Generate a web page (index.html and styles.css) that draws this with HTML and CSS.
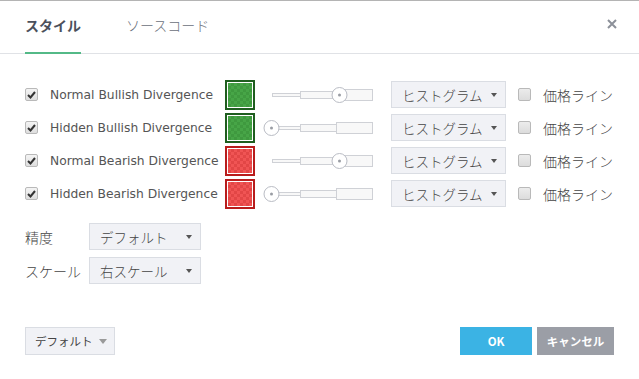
FILE: index.html
```html
<!DOCTYPE html>
<html lang="ja">
<head>
    <meta charset="UTF-8">
    <title>スタイル</title>
    <link rel="stylesheet" href="styles.css">
</head>
<body>
    <div class="dialog">
        <div class="header">
            <div class="tab active">スタイル</div>
            <div class="tab">ソースコード</div>
            <svg class="close" width="10" height="10" viewBox="0 0 10 10">
                <path d="M1 1 L9 9 M9 1 L1 9" stroke="#8c9099" stroke-width="2"/>
            </svg>
        </div>

        <div class="content">
            <div class="row">
                <span class="check checked"><svg width="9" height="8" viewBox="0 0 9 8"><path d="M1 4 L3.5 6.5 L8 1" stroke="#333" stroke-width="2" fill="none"/></svg></span>
                <span class="label">Normal Bullish Divergence</span>
                <span class="swatch green"><span></span></span>
                <svg class="slider" width="112" height="20" viewBox="0 0 112 20">
                    <rect x="10.5" y="8.5" width="28" height="3" fill="#f8f8f8" stroke="#cfd1d6"/>
                    <rect x="38.5" y="6.5" width="36" height="7" fill="#f8f8f8" stroke="#cfd1d6"/>
                    <rect x="74.5" y="4.5" width="36" height="11" fill="#f8f8f8" stroke="#cfd1d6"/>
                    <circle cx="77.5" cy="10" r="7.5" fill="#fff" stroke="#b9bcc4"/>
                    <circle cx="77.5" cy="10" r="1.5" fill="#9a9da4"/>
                </svg>
                <span class="select wide">ヒストグラム<i class="caret"></i></span>
                <span class="check"></span>
                <span class="price">価格ライン</span>
            </div>
            <div class="row">
                <span class="check checked"><svg width="9" height="8" viewBox="0 0 9 8"><path d="M1 4 L3.5 6.5 L8 1" stroke="#333" stroke-width="2" fill="none"/></svg></span>
                <span class="label">Hidden Bullish Divergence</span>
                <span class="swatch green"><span></span></span>
                <svg class="slider" width="112" height="20" viewBox="0 0 112 20">
                    <rect x="10.5" y="8.5" width="28" height="3" fill="#f8f8f8" stroke="#cfd1d6"/>
                    <rect x="38.5" y="6.5" width="36" height="7" fill="#f8f8f8" stroke="#cfd1d6"/>
                    <rect x="74.5" y="4.5" width="36" height="11" fill="#f8f8f8" stroke="#cfd1d6"/>
                    <circle cx="9.5" cy="10" r="7.5" fill="#fff" stroke="#b9bcc4"/>
                    <circle cx="9.5" cy="10" r="1.5" fill="#9a9da4"/>
                </svg>
                <span class="select wide">ヒストグラム<i class="caret"></i></span>
                <span class="check"></span>
                <span class="price">価格ライン</span>
            </div>
            <div class="row">
                <span class="check checked"><svg width="9" height="8" viewBox="0 0 9 8"><path d="M1 4 L3.5 6.5 L8 1" stroke="#333" stroke-width="2" fill="none"/></svg></span>
                <span class="label">Normal Bearish Divergence</span>
                <span class="swatch red"><span></span></span>
                <svg class="slider" width="112" height="20" viewBox="0 0 112 20">
                    <rect x="10.5" y="8.5" width="28" height="3" fill="#f8f8f8" stroke="#cfd1d6"/>
                    <rect x="38.5" y="6.5" width="36" height="7" fill="#f8f8f8" stroke="#cfd1d6"/>
                    <rect x="74.5" y="4.5" width="36" height="11" fill="#f8f8f8" stroke="#cfd1d6"/>
                    <circle cx="77.5" cy="10" r="7.5" fill="#fff" stroke="#b9bcc4"/>
                    <circle cx="77.5" cy="10" r="1.5" fill="#9a9da4"/>
                </svg>
                <span class="select wide">ヒストグラム<i class="caret"></i></span>
                <span class="check"></span>
                <span class="price">価格ライン</span>
            </div>
            <div class="row">
                <span class="check checked"><svg width="9" height="8" viewBox="0 0 9 8"><path d="M1 4 L3.5 6.5 L8 1" stroke="#333" stroke-width="2" fill="none"/></svg></span>
                <span class="label">Hidden Bearish Divergence</span>
                <span class="swatch red"><span></span></span>
                <svg class="slider" width="112" height="20" viewBox="0 0 112 20">
                    <rect x="10.5" y="8.5" width="28" height="3" fill="#f8f8f8" stroke="#cfd1d6"/>
                    <rect x="38.5" y="6.5" width="36" height="7" fill="#f8f8f8" stroke="#cfd1d6"/>
                    <rect x="74.5" y="4.5" width="36" height="11" fill="#f8f8f8" stroke="#cfd1d6"/>
                    <circle cx="9.5" cy="10" r="7.5" fill="#fff" stroke="#b9bcc4"/>
                    <circle cx="9.5" cy="10" r="1.5" fill="#9a9da4"/>
                </svg>
                <span class="select wide">ヒストグラム<i class="caret"></i></span>
                <span class="check"></span>
                <span class="price">価格ライン</span>
            </div>

            <div class="options">
                <div class="option">
                    <span class="opt-label">精度</span>
                    <span class="select narrow">デフォルト<i class="caret"></i></span>
                </div>
                <div class="option">
                    <span class="opt-label">スケール</span>
                    <span class="select narrow">右スケール<i class="caret"></i></span>
                </div>
            </div>
        </div>

        <div class="footer">
            <span class="btn-default">デフォルト<i class="caret light"></i></span>
            <div class="actions">
                <span class="btn ok">OK</span>
                <span class="btn cancel">キャンセル</span>
            </div>
        </div>
    </div>
</body>
</html>
```

FILE: styles.css
```css
body {
    margin: 0;
    background-color: #ffffff;
    font-family: "Noto Sans CJK JP", "DejaVu Sans", sans-serif;
    font-weight: 300;
    color: #444444;
}
.dialog {
    width: 639px;
    height: 379px;
    border-top: 1px solid #b4b4b4;
    box-sizing: border-box;
    display: flex;
    flex-direction: column;
}
.header {
    height: 52px;
    border-bottom: 1px solid #e0e2e6;
    display: flex;
    align-items: stretch;
    padding-left: 25px;
    position: relative;
}
.tab {
    font-size: 14px;
    color: #6b707b;
    display: flex;
    align-items: center;
    margin-right: 45px;
    padding-bottom: 3px;
    box-sizing: border-box;
    border-bottom: 2px solid transparent;
    margin-bottom: -1px;
}
.tab.active {
    color: #4b505c;
    font-weight: bold;
    border-bottom-color: #53b987;
}
.close {
    position: absolute;
    right: 22px;
    top: 18px;
}
.content {
    padding: 24px 0 0 25px;
}
.row {
    display: flex;
    align-items: center;
    height: 33px;
}
.check {
    width: 11px;
    height: 11px;
    border: 1px solid #b9b9b9;
    border-radius: 2px;
    background: linear-gradient(#f4f4f4, #dedede);
    display: flex;
    align-items: center;
    justify-content: center;
    flex-shrink: 0;
}
.label {
    font-family: "DejaVu Sans", sans-serif;
    font-weight: normal;
    font-size: 12.3px;
    color: #555555;
    margin-left: 12px;
    width: 175px;
    white-space: nowrap;
}
.swatch {
    width: 24px;
    height: 24px;
    border: 2px solid #1f5e1f;
    padding: 1px;
    background: #ffffff;
    display: block;
}
.swatch span {
    display: block;
    width: 100%;
    height: 100%;
    background-size: 6px 6px;
}
.swatch.green span {
    background-color: #47a547;
    background-image: conic-gradient(#3f993f 25%, transparent 0 50%, #3f993f 0 75%, transparent 0);
}
.swatch.red {
    border-color: #b81c1c;
}
.swatch.red span {
    background-color: #f05454;
    background-image: conic-gradient(#e24646 25%, transparent 0 50%, #e24646 0 75%, transparent 0);
}
.slider {
    margin-left: 7px;
    display: block;
}
.select {
    height: 25px;
    border: 1px solid #dadde3;
    background-color: #f1f2f6;
    font-size: 13.5px;
    display: flex;
    align-items: center;
    padding-left: 10px;
    position: relative;
    box-sizing: content-box;
    white-space: nowrap;
}
.select.wide {
    width: 103px;
    margin-left: 17px;
}
.select.narrow {
    width: 100px;
}
.caret {
    position: absolute;
    right: 8px;
    top: 11px;
    border-left: 3.5px solid transparent;
    border-right: 3.5px solid transparent;
    border-top: 4px solid #555555;
}
.row .check:not(.checked) {
    margin-left: 12px;
    background: linear-gradient(#ececec, #dcdcdc);
}
.price {
    font-size: 14px;
    margin-left: 12px;
}
.options {
    margin-top: 13px;
    display: flex;
    flex-direction: column;
    gap: 7px;
}
.option {
    display: flex;
    align-items: center;
}
.opt-label {
    width: 64px;
    font-size: 14px;
}
.footer {
    margin-top: auto;
    height: 52px;
    padding: 0 25px;
    display: flex;
    align-items: flex-start;
    justify-content: space-between;
}
.btn-default {
    height: 26px;
    padding: 0 21px 0 9px;
    border: 1px solid #dadde3;
    background-color: #f1f2f6;
    font-size: 11.5px;
    font-weight: normal;
    display: flex;
    align-items: center;
    position: relative;
}
.caret.light {
    border-top-color: #9a9a9a;
    border-left-width: 4.5px;
    border-right-width: 4.5px;
    border-top-width: 5px;
    right: 7px;
}
.actions {
    display: flex;
    gap: 5px;
}
.btn {
    height: 28px;
    display: flex;
    align-items: center;
    justify-content: center;
    color: #ffffff;
    font-size: 11.5px;
    font-weight: bold;
}
.btn.ok {
    width: 72px;
    background-color: #3bb3e4;
}
.btn.cancel {
    width: 77px;
    background-color: #9b9ea6;
}
```
